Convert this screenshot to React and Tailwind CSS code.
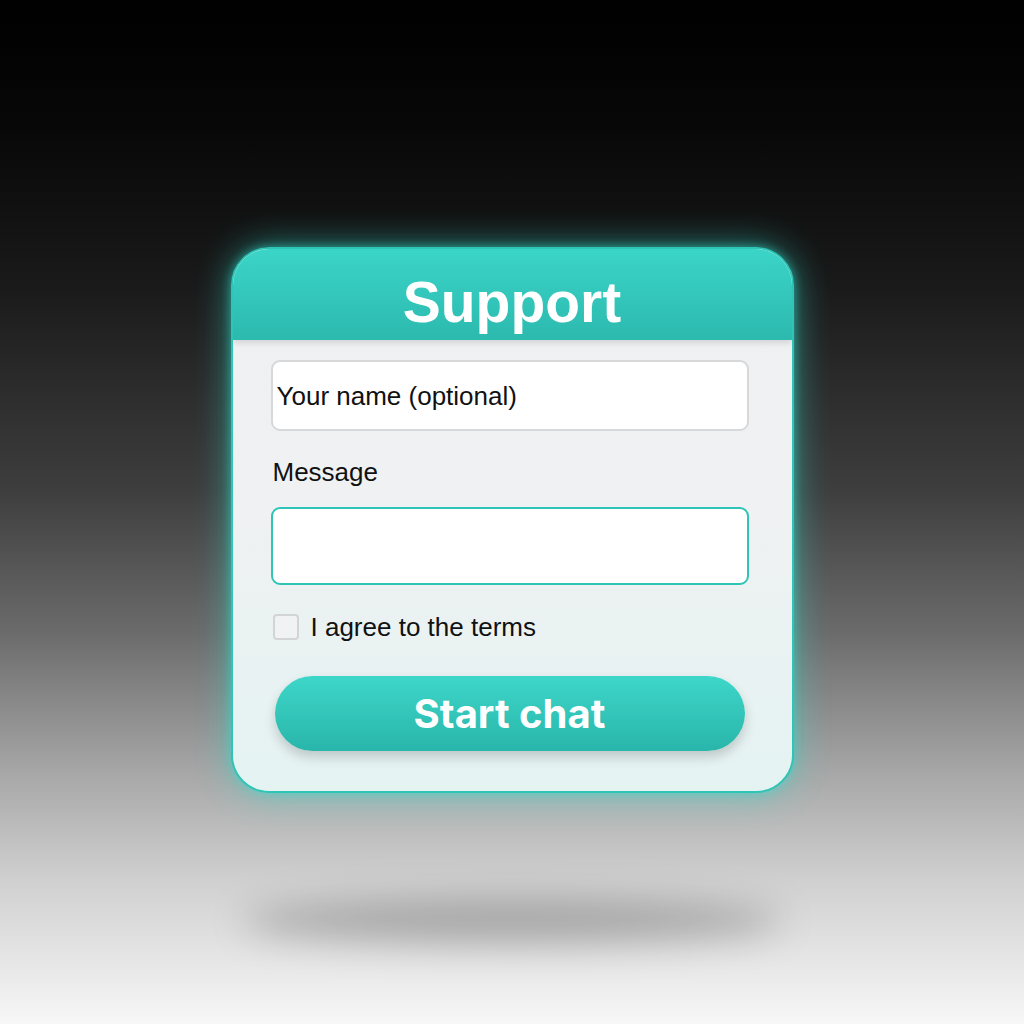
export default function App() {
  return (
    <div
      className="w-[1024px] h-[1024px] flex flex-col items-center overflow-hidden"
      style={{
        background:
          "linear-gradient(to bottom, #000 0%, #070707 12%, #1a1a1a 28%, #3e3e3e 48%, #6c6c6c 62%, #a5a5a5 75%, #d0d0d0 86%, #f7f7f7 100%)",
      }}
    >
      <div className="mt-[247px] w-[563px] h-[546px] rounded-[38px] border-2 border-[#2ec4b6] overflow-hidden flex flex-col shadow-[0_0_36px_rgba(52,220,205,0.6),0_0_10px_rgba(52,220,205,0.55)] bg-gradient-to-b from-[#eef0f1] via-[#eff1f2] to-[#e4f3f2]">
        <div className="h-[91px] shrink-0 flex items-center justify-center bg-gradient-to-b from-[#3bd5c8] to-[#2cb9ae] shadow-[0_3px_6px_rgba(0,0,0,0.12)]">
          <span
            className="text-white font-bold text-[57px] leading-none mt-[16px]"
            style={{ fontFamily: '"Liberation Sans", Arial, sans-serif' }}
          >
            Support
          </span>
        </div>
        <div
          className="flex flex-col pl-[38px] pr-[43px] pt-[20px]"
          style={{ fontFamily: '"Liberation Sans", Arial, sans-serif' }}
        >
          <div className="h-[71px] bg-white border-2 border-[#d6d8d9] rounded-[9px] flex items-center px-[4px]">
            <span className="text-[26px] text-[#111] leading-none">Your name (optional)</span>
          </div>
          <div className="mt-[26px] h-[30px] flex items-center pl-[2px] text-[26px] text-[#111] leading-none">
            Message
          </div>
          <div className="mt-[20px] h-[78px] bg-white border-2 border-[#2ec4b6] rounded-[9px]"></div>
          <div className="mt-[29px] flex items-center gap-[12px] pl-[2px]">
            <div className="w-[26px] h-[26px] rounded-[4px] border-2 border-[#d2d4d5] bg-[#f1f2f3]"></div>
            <span className="text-[26px] text-[#111] leading-none">I agree to the terms</span>
          </div>
          <div className="mt-[36px] mx-[4px] h-[75px] rounded-full bg-gradient-to-b from-[#3dd7c9] to-[#29b5aa] flex items-center justify-center shadow-[0_6px_12px_rgba(0,0,0,0.18)]">
            <span
              className="text-white font-bold text-[40px] leading-none"
              style={{ fontFamily: 'Inter, "Liberation Sans", sans-serif' }}
            >
              Start chat
            </span>
          </div>
        </div>
      </div>
      <div className="mt-[106px] w-[540px] h-[44px] rounded-[50%] bg-black/25 blur-[18px]"></div>
    </div>
  );
}
